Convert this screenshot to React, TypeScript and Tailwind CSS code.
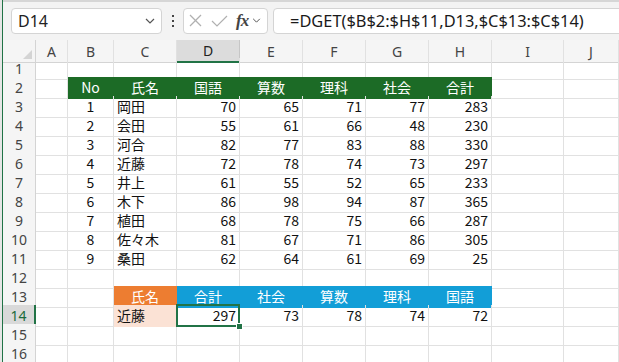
import React from 'react'

const COLS = ['A', 'B', 'C', 'D', 'E', 'F', 'G', 'H', 'I', 'J']

const data: [number, string, number, number, number, number, number][] = [
  [1, '岡田', 70, 65, 71, 77, 283],
  [2, '会田', 55, 61, 66, 48, 230],
  [3, '河合', 82, 77, 83, 88, 330],
  [4, '近藤', 72, 78, 74, 73, 297],
  [5, '井上', 61, 55, 52, 65, 233],
  [6, '木下', 86, 98, 94, 87, 365],
  [7, '植田', 68, 78, 75, 66, 287],
  [8, '佐々木', 81, 67, 71, 86, 305],
  [9, '桑田', 62, 64, 61, 69, 25],
]

type CellDef = {
  v?: string | number
  align?: 'left' | 'right' | 'center'
  fill?: string
  text?: string
  selected?: boolean
}

function Cell({ c }: { c: CellDef }) {
  const align =
    c.align === 'right' ? 'justify-end pr-[3px]' : c.align === 'center' ? 'justify-center' : 'justify-start pl-[3px]'
  return (
    <div
      className={`relative flex items-center border-r border-b overflow-visible whitespace-nowrap ${align} ${
        c.fill ?? 'border-[#e1e1e1]'
      } ${c.text ?? 'text-[#111]'}`}
    >
      {c.v}
      {c.selected && (
        <>
          <div className="absolute z-10 -left-[1px] -top-[1px] -right-[1px] -bottom-[1px] border-2 border-[#217346]" />
          <div className="absolute z-20 -right-[4px] -bottom-[4px] w-[7px] h-[7px] bg-[#217346] border border-white" />
        </>
      )}
    </div>
  )
}

function Row({ n, cells, selected }: { n: number; cells: CellDef[]; selected?: boolean }) {
  const all = [...cells]
  while (all.length < 10) all.push({})
  return (
    <div className="grid grid-cols-[33px_32px_46px_63px_63px_63px_63px_63px_63px_72px_1fr] h-[19px]">
      <div
        className={`flex items-center justify-center border-b font-['Noto_Sans','Open_Sans',sans-serif] text-[14px] ${
          selected
            ? 'bg-[#d9d9d9] border-[#c6c6c6] border-r-2 border-r-[#217346] text-[#1a6b3c]'
            : 'bg-[#f5f5f5] border-[#e1e1e1] border-r border-r-[#d4d4d4] text-[#444]'
        }`}
      >
        {n}
      </div>
      {all.map((c, i) => (
        <Cell key={i} c={c} />
      ))}
    </div>
  )
}

const green = 'bg-[#1c6b26] border-[#1c6b26]'
const blue = 'bg-[#129ed7] border-[#129ed7]'
const orange = 'bg-[#ed7d31] border-[#ed7d31]'
const peach = 'bg-[#fbe2d5] border-[#fbe2d5]'

function Chevron({ className }: { className?: string }) {
  return (
    <svg className={className} viewBox="0 0 10 6" fill="none" stroke="#555" strokeWidth={1.2}>
      <polyline points="1,1 5,5 9,1" />
    </svg>
  )
}

export default function App() {
  const head = ['No', '氏名', '国語', '算数', '理科', '社会', '合計']
  const rows: { cells: CellDef[]; selected?: boolean }[] = []
  rows.push({ cells: [] })
  rows.push({
    cells: [{}, ...head.map((h) => ({ v: h, align: 'center' as const, fill: green, text: 'text-white' }))],
  })
  data.forEach((r) => {
    rows.push({
      cells: [
        {},
        { v: r[0], align: 'center' },
        { v: r[1], align: 'left' },
        ...r.slice(2).map((x) => ({ v: x, align: 'right' as const })),
      ],
    })
  })
  rows.push({ cells: [] })
  rows.push({
    cells: [
      {},
      {},
      { v: '氏名', align: 'center', fill: orange, text: 'text-white' },
      ...['合計', '社会', '算数', '理科', '国語'].map((h) => ({
        v: h,
        align: 'center' as const,
        fill: blue,
        text: 'text-white',
      })),
    ],
  })
  rows.push({
    selected: true,
    cells: [
      {},
      {},
      { v: '近藤', align: 'left', fill: peach },
      { v: 297, align: 'right', selected: true },
      { v: 73, align: 'right' },
      { v: 78, align: 'right' },
      { v: 74, align: 'right' },
      { v: 72, align: 'right' },
    ],
  })
  rows.push({ cells: [] })
  rows.push({ cells: [] })

  return (
    <div className="w-[619px] h-[362px] overflow-hidden flex bg-white">
      <div className="w-[2px] bg-[#e6e6e6]" />
      <div className="w-px bg-[#217346]" />
      <div className="flex-1 min-w-0 flex flex-col">
        {/* formula bar */}
        <div className="h-[2px] bg-[#d6d6d6]" />
        <div className="h-[40px] bg-[#f3f3f3] flex items-start pt-[6px] pl-[8px] font-['Noto_Sans','Open_Sans',sans-serif]">
          <div className="w-[151px] h-[26px] bg-white border border-[#d4d4d4] rounded-[4px] flex items-center pl-[6px] pr-[6px] text-[16px] text-[#222]">
            <span className="flex-1">D14</span>
            <Chevron className="w-[10px] h-[6px]" />
          </div>
          <div className="w-[21px] h-[26px] flex flex-col items-center justify-center gap-[3px]">
            <div className="w-[2px] h-[2px] bg-[#444]" />
            <div className="w-[2px] h-[2px] bg-[#444]" />
            <div className="w-[2px] h-[2px] bg-[#444]" />
          </div>
          <div className="w-[85px] h-[26px] bg-white border border-[#d4d4d4] rounded-[4px] flex items-center pl-[5px]">
            <svg className="w-[13px] h-[13px]" viewBox="0 0 13 13" stroke="#b0b0b0" strokeWidth={1.2}>
              <line x1="1" y1="1" x2="12" y2="12" />
              <line x1="12" y1="1" x2="1" y2="12" />
            </svg>
            <svg className="w-[17px] h-[12px] ml-[9px]" viewBox="0 0 17 12" fill="none" stroke="#b0b0b0" strokeWidth={1.2}>
              <polyline points="1,6 6,11 16,1" />
            </svg>
            <span className="ml-[8px] font-['Liberation_Serif',serif] italic font-bold text-[17px] leading-none text-[#444] tracking-[-1px]">
              fx
            </span>
            <Chevron className="w-[9px] h-[5px] ml-[4px]" />
          </div>
          <div className="flex-1 -mr-[6px] ml-[5px] h-[26px] bg-white border border-[#d4d4d4] rounded-[4px] flex items-center pl-[16px] text-[16.4px] text-[#1a1a1a] whitespace-nowrap">
            =DGET($B$2:$H$11,D13,$C$13:$C$14)
          </div>
        </div>
        {/* column headers */}
        <div className="grid grid-cols-[33px_32px_46px_63px_63px_63px_63px_63px_63px_72px_1fr] h-[18px] font-['Noto_Sans','Open_Sans',sans-serif] text-[14px] text-[#444]">
          <div className="relative bg-[#f5f5f5] border-r border-b border-[#d4d4d4]">
            <div className="absolute right-[3px] bottom-[3px] w-0 h-0 border-l-[9px] border-l-transparent border-b-[9px] border-b-[#d4d4d4]" />
          </div>
          {COLS.map((l) => (
            <div
              key={l}
              className={`flex items-center justify-center border-r ${
                l === 'D'
                  ? 'bg-[#dcdcdc] border-r-[#c6c6c6] border-b-2 border-b-[#217346] text-[#222]'
                  : 'bg-[#f5f5f5] border-r-[#e1e1e1] border-b border-b-[#d4d4d4]'
              }`}
            >
              {l}
            </div>
          ))}
        </div>
        {/* sheet */}
        <div className="font-['Noto_Sans_CJK_JP',sans-serif] text-[14px]">
          {rows.map((r, i) => (
            <Row key={i} n={i + 1} cells={r.cells} selected={r.selected} />
          ))}
        </div>
      </div>
    </div>
  )
}
